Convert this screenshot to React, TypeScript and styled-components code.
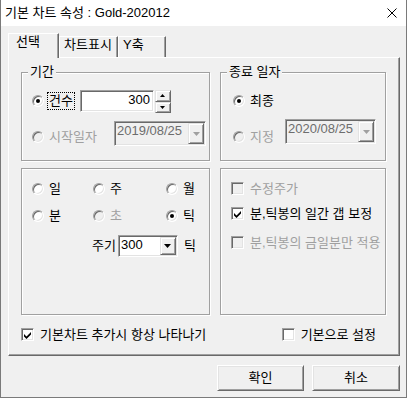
import React from 'react';
import styled, { createGlobalStyle, css } from 'styled-components';

const GlobalStyle = createGlobalStyle`
  * { box-sizing: border-box; }
  html, body { margin: 0; padding: 0; background: #f0f0f0; }
  body {
    font-family: "Liberation Sans", "Noto Sans CJK KR", sans-serif;
    font-size: 13px;
    color: #000;
  }
`;

const sunken = css`
  border: 1px solid;
  border-color: #a0a0a0 #fff #fff #a0a0a0;
  box-shadow: inset 1px 1px #696969, inset -1px -1px #e3e3e3;
`;

const raised = css`
  border: 1px solid;
  border-color: #e3e3e3 #696969 #696969 #e3e3e3;
  box-shadow: inset 1px 1px #fff, inset -1px -1px #a0a0a0;
`;

const Window = styled.div`
  width: 407px;
  height: 398px;
  display: flex;
  flex-direction: column;
  background: #f0f0f0;
  border: 1px solid #7a7a7a;
  border-top: none;
`;

const TitleBar = styled.div`
  height: 26px;
  flex: none;
  display: flex;
  align-items: center;
  justify-content: space-between;
  padding: 0 9px 1px 4px;
  background: #fff;
  line-height: 14px;
`;

const Body = styled.div`
  padding: 7px 6px 0 7px;
  display: flex;
  flex-direction: column;
`;

const TabStrip = styled.div`
  display: flex;
  align-items: flex-end;
  height: 24px;
`;

const Tab = styled.div<{ $active?: boolean; $w: number }>`
  position: relative;
  z-index: ${p => (p.$active ? 1 : 0)};
  width: ${p => p.$w}px;
  height: ${p => (p.$active ? 25 : 21)}px;
  margin-bottom: ${p => (p.$active ? -1 : 0)}px;
  padding: 1px 0 0 ${p => (p.$active ? 7 : 4)}px;
  border: 1px solid #fff;
  border-right-color: #696969;
  border-bottom: none;
  box-shadow: inset -1px 0 #a0a0a0;
  background: #f0f0f0;
  line-height: 14px;
  white-space: nowrap;
`;

const Panel = styled.div`
  height: 299px;
  border: 1px solid;
  border-color: #fff #696969 #696969 #fff;
  box-shadow: inset -1px -1px #a0a0a0;
  padding: 14px 13px 0 12px;
  display: flex;
  flex-direction: column;
`;

const GroupGrid = styled.div`
  display: grid;
  grid-template-columns: 189px 166px;
  grid-template-rows: 89px 147px;
  column-gap: 10px;
  row-gap: 7px;
`;

const Group = styled.div`
  border: 1px solid #a0a0a0;
  box-shadow: inset 1px 1px #fff, 1px 1px #fff;
  display: flex;
  flex-direction: column;
  min-width: 0;
`;

const Caption = styled.div`
  align-self: flex-start;
  margin: -8px 0 0 6px;
  padding: 0 2px;
  line-height: 14px;
  background: #f0f0f0;
`;

const GroupBody = styled.div<{ $pt: number; $pl: number }>`
  display: flex;
  flex-direction: column;
  padding: ${p => p.$pt}px 0 0 ${p => p.$pl}px;
`;

const Row = styled.div<{ $h: number; $mt?: number }>`
  display: flex;
  align-items: center;
  height: ${p => p.$h}px;
  margin-top: ${p => p.$mt ?? 0}px;
`;

const Option = styled.div<{ $dy?: number; $gap?: number }>`
  display: flex;
  align-items: center;
  gap: ${p => p.$gap ?? 5}px;
  margin-top: ${p => p.$dy ?? 0}px;
  flex: none;
`;

const Label = styled.span<{ $disabled?: boolean; $ml?: number }>`
  color: ${p => (p.$disabled ? '#a0a0a0' : '#000')};
  margin-left: ${p => p.$ml ?? 0}px;
  line-height: 14px;
  white-space: nowrap;
`;

const FocusLabel = styled.span`
  display: flex;
  align-items: center;
  height: 18px;
  padding: 0 1px;
  border: 1px dotted #000;
  line-height: 14px;
`;

const RadioMark = styled.span<{ $checked?: boolean; $disabled?: boolean }>`
  width: 12px;
  height: 12px;
  flex: none;
  border-radius: 50%;
  border: 1px solid;
  border-color: #a0a0a0 #fff #fff #a0a0a0;
  box-shadow: inset 1px 1px #696969, inset -1px -1px #e3e3e3;
  background: ${p => (p.$disabled ? '#f0f0f0' : '#fff')};
  display: flex;
  align-items: center;
  justify-content: center;
  &::after {
    content: '';
    display: ${p => (p.$checked ? 'block' : 'none')};
    width: 4px;
    height: 4px;
    border-radius: 50%;
    background: #000;
  }
`;

const CheckMark = styled.span<{ $disabled?: boolean }>`
  width: 13px;
  height: 13px;
  flex: none;
  ${sunken};
  background: ${p => (p.$disabled ? '#f0f0f0' : '#fff')};
  display: flex;
  align-items: center;
  justify-content: center;
`;

const EditBox = styled.div`
  ${sunken};
  width: 74px;
  height: 22px;
  margin-left: 5px;
  background: #fff;
  padding: 1px 3px 0 0;
  text-align: right;
  line-height: 15px;
`;

const Spin = styled.div`
  display: flex;
  flex-direction: column;
  width: 16px;
  height: 23px;
  margin: 1px 0 0 1px;
`;

const SpinButton = styled.span`
  ${raised};
  flex: 1;
  display: flex;
  align-items: center;
  justify-content: center;
  background: #f0f0f0;
`;

const Combo = styled.div<{ $w: number; $h: number; $mr?: number; $auto?: boolean; $disabled?: boolean }>`
  ${sunken};
  width: ${p => p.$w}px;
  height: ${p => p.$h}px;
  margin-left: ${p => (p.$auto ? 'auto' : '2px')};
  margin-right: ${p => p.$mr ?? 0}px;
  display: flex;
  background: ${p => (p.$disabled ? '#f0f0f0' : '#fff')};
  flex: none;
`;

const ComboText = styled.span<{ $disabled?: boolean }>`
  flex: 1;
  padding: 1px 0 0 2px;
  line-height: 15px;
  color: ${p => (p.$disabled ? '#6d6d6d' : '#000')};
`;

const ComboButton = styled.span`
  ${raised};
  width: 16px;
  flex: none;
  margin: 1px;
  display: flex;
  align-items: center;
  justify-content: center;
  background: #f0f0f0;
`;

const RadioGrid = styled.div`
  display: grid;
  grid-template-columns: 61px 73px 1fr;
  grid-auto-rows: 13px;
  row-gap: 14px;
`;

const PeriodRow = styled.div`
  display: flex;
  align-items: center;
  height: 22px;
  margin-top: 13px;
  padding-left: 70px;
`;

const CheckRow = styled.div<{ $mt: number }>`
  display: flex;
  align-items: center;
  gap: 6px;
  height: 13px;
  margin-top: ${p => p.$mt}px;
`;

const FooterRow = styled.div`
  display: flex;
  justify-content: space-between;
  align-items: center;
  height: 13px;
  margin-top: 13px;
  padding-right: 10px;
`;

const ButtonRow = styled.div`
  display: flex;
  justify-content: flex-end;
  gap: 8px;
  margin-top: 9px;
`;

const PushButton = styled.button<{ $w: number }>`
  width: ${p => p.$w}px;
  height: 26px;
  border: 1px solid;
  border-color: #fff #696969 #696969 #fff;
  box-shadow: inset 1px 1px #e3e3e3, inset -1px -1px #a0a0a0;
  background: #f0f0f0;
  font: inherit;
  line-height: 14px;
  padding: 0;
  color: #000;
`;

const Arrow = ({ color = '#000' }: { color?: string }) => (
  <svg width="7" height="4" viewBox="0 0 7 4">
    <polygon points="0,0 7,0 3.5,4" fill={color} />
  </svg>
);

const SmallArrow = ({ up }: { up?: boolean }) => (
  <svg width="5" height="3" viewBox="0 0 5 3">
    <polygon points={up ? '0,3 5,3 2.5,0' : '0,0 5,0 2.5,3'} fill="#000" />
  </svg>
);

const Tick = () => (
  <svg width="8" height="8" viewBox="0 0 8 8">
    <polygon points="0,3 2.5,5.5 7,1 7,3.5 2.5,8 0,5.5" fill="#000" />
  </svg>
);

const CloseIcon = () => (
  <svg width="10" height="10" viewBox="0 0 10 10">
    <path d="M0.5 0.5 L9.5 9.5 M9.5 0.5 L0.5 9.5" stroke="#000" strokeWidth="1" />
  </svg>
);

const Radio = ({ label, checked, disabled, dy }: { label: string; checked?: boolean; disabled?: boolean; dy?: number }) => (
  <Option $dy={dy}>
    <RadioMark $checked={checked} $disabled={disabled} />
    <Label $disabled={disabled}>{label}</Label>
  </Option>
);

const Check = ({ label, checked, disabled, mt }: { label: string; checked?: boolean; disabled?: boolean; mt: number }) => (
  <CheckRow $mt={mt}>
    <CheckMark $disabled={disabled}>{checked && <Tick />}</CheckMark>
    <Label $disabled={disabled}>{label}</Label>
  </CheckRow>
);

export default function App() {
  return (
    <>
      <GlobalStyle />
      <Window>
        <TitleBar>
          <span>기본 차트 속성 : Gold-202012</span>
          <CloseIcon />
        </TitleBar>
        <Body>
          <TabStrip>
            <Tab $active $w={51}>선택</Tab>
            <Tab $w={59}>차트표시</Tab>
            <Tab $w={48}>Y축</Tab>
          </TabStrip>
          <Panel>
            <GroupGrid>
              <Group>
                <Caption>기간</Caption>
                <GroupBody $pt={11} $pl={10}>
                  <Row $h={22}>
                    <Option $gap={3}>
                      <RadioMark $checked />
                      <FocusLabel>건수</FocusLabel>
                    </Option>
                    <EditBox>300</EditBox>
                    <Spin>
                      <SpinButton><SmallArrow up /></SpinButton>
                      <SpinButton><SmallArrow /></SpinButton>
                    </Spin>
                  </Row>
                  <Row $h={25} $mt={9}>
                    <Radio label="시작일자" disabled dy={7} />
                    <Combo $w={92} $h={25} $mr={3} $auto $disabled>
                      <ComboText $disabled>2019/08/25</ComboText>
                      <ComboButton><Arrow color="#a0a0a0" /></ComboButton>
                    </Combo>
                  </Row>
                </GroupBody>
              </Group>

              <Group>
                <Caption>종료 일자</Caption>
                <GroupBody $pt={11} $pl={12}>
                  <Row $h={22}>
                    <Radio label="최종" checked />
                  </Row>
                  <Row $h={25} $mt={7}>
                    <Radio label="지정" disabled dy={11} />
                    <Combo $w={91} $h={25} $mr={9} $auto $disabled>
                      <ComboText $disabled>2020/08/25</ComboText>
                      <ComboButton><Arrow color="#a0a0a0" /></ComboButton>
                    </Combo>
                  </Row>
                </GroupBody>
              </Group>

              <Group>
                <GroupBody $pt={13} $pl={10}>
                  <RadioGrid>
                    <Radio label="일" />
                    <Radio label="주" />
                    <Radio label="월" />
                    <Radio label="분" />
                    <Radio label="초" disabled />
                    <Radio label="틱" checked />
                  </RadioGrid>
                </GroupBody>
                <PeriodRow>
                  <Label>주기</Label>
                  <Combo $w={60} $h={22}>
                    <ComboText>300</ComboText>
                    <ComboButton><Arrow /></ComboButton>
                  </Combo>
                  <Label $ml={6}>틱</Label>
                </PeriodRow>
              </Group>

              <Group>
                <GroupBody $pt={0} $pl={10}>
                  <Check label="수정주가" disabled mt={13} />
                  <Check label="분,틱봉의 일간 갭 보정" checked mt={12} />
                  <Check label="분,틱봉의 금일분만 적용" disabled mt={16} />
                </GroupBody>
              </Group>
            </GroupGrid>

            <FooterRow>
              <CheckRow $mt={0}>
                <CheckMark><Tick /></CheckMark>
                <Label>기본차트 추가시 항상 나타나기</Label>
              </CheckRow>
              <CheckRow $mt={0}>
                <CheckMark />
                <Label>기본으로 설정</Label>
              </CheckRow>
            </FooterRow>
          </Panel>

          <ButtonRow>
            <PushButton $w={87}>확인</PushButton>
            <PushButton $w={88}>취소</PushButton>
          </ButtonRow>
        </Body>
      </Window>
    </>
  );
}
